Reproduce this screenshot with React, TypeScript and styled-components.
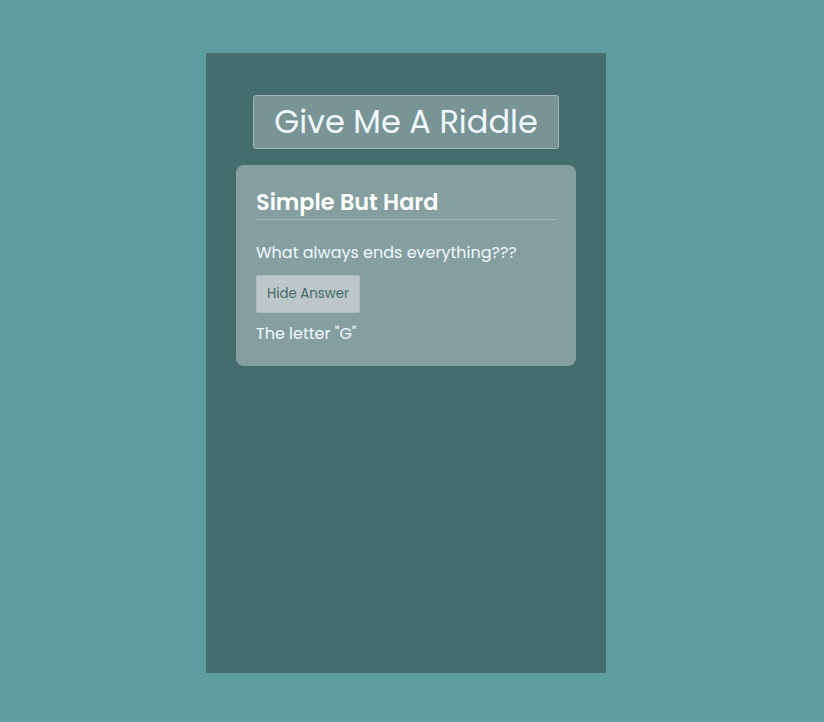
import React, { useState } from "react";
import styled, { createGlobalStyle } from "styled-components";

const Global = createGlobalStyle`
  html, body { margin: 0; padding: 0; background: #5f9ea0; }
  body { font-family: "Poppins", "Open Sans", "Noto Sans", sans-serif; }
  #root { min-height: 722px; }
`;

const Page = styled.div`
  display: flex;
  justify-content: center;
  padding: 53px 12px 0 0;
  min-height: 722px;
  box-sizing: border-box;
`;

const Panel = styled.main`
  width: 400px;
  height: 620px;
  background: #466d6d;
  display: flex;
  flex-direction: column;
  align-items: center;
  padding: 42px 30px 0;
  box-sizing: border-box;
  gap: 16px;
`;

const RiddleButton = styled.button`
  width: 306px;
  height: 54px;
  background: #789495;
  border: 1px solid #a3b6b7;
  border-radius: 3px;
  color: #f0f8ff;
  font-family: inherit;
  font-size: 32px;
  font-weight: 400;
  cursor: pointer;
  padding: 0;
`;

const Card = styled.section`
  width: 100%;
  background: #859fa0;
  border-radius: 8px;
  padding: 20px 20px 20px;
  box-sizing: border-box;
  color: #f0f8ff;
`;

const Title = styled.h2`
  margin: 0;
  font-size: 22.4px;
  font-weight: 600;
  color: #ffffff;
  line-height: 33px;
  padding-top: 1px;
  border-bottom: 1px solid #a9bcbd;
`;

const Question = styled.p`
  margin: 21px 0 10px;
  font-size: 16px;
  line-height: 24px;
`;

const AnswerButton = styled.button`
  height: 38px;
  padding: 0 10px;
  background: #bdc6c8;
  border: 1px solid #aebfc2;
  border-radius: 2px;
  color: #466d6d;
  font-family: inherit;
  font-size: 13.333px;
  cursor: pointer;
`;

const Answer = styled.p`
  margin: 9px 0 0;
  font-size: 16px;
  line-height: 24px;
`;

export default function App() {
  const [show, setShow] = useState(true);
  return (
    <>
      <Global />
      <Page>
        <Panel>
          <RiddleButton>Give Me A Riddle</RiddleButton>
          <Card>
            <Title>Simple But Hard</Title>
            <Question>What always ends everything???</Question>
            <AnswerButton onClick={() => setShow(!show)}>
              {show ? "Hide Answer" : "Show Answer"}
            </AnswerButton>
            {show && <Answer>The letter "G"</Answer>}
          </Card>
        </Panel>
      </Page>
    </>
  );
}
